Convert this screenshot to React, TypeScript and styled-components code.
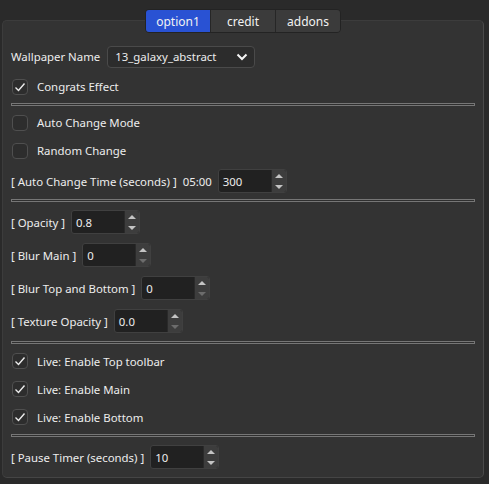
import styled, { createGlobalStyle } from "styled-components";

const Global = createGlobalStyle`
  html, body {
    margin: 0;
    padding: 0;
    background: #2a2a2a;
  }
  body {
    font-family: "Noto Sans", "Open Sans", sans-serif;
    font-size: 11.4px;
    color: #ededed;
  }
`;

const Page = styled.div`
  width: 489px;
  height: 484px;
  padding: 9px 0 0 2px;
  box-sizing: border-box;
`;

const TabWidget = styled.div`
  width: 482px;
  display: flex;
  flex-direction: column;
`;

const TabBar = styled.div`
  align-self: center;
  display: flex;
  height: 24px;
  margin-bottom: -13px;
  position: relative;
  z-index: 1;
  border: 1px solid #232323;
  border-radius: 4px;
  overflow: hidden;
  box-sizing: border-box;
`;

const Tab = styled.div<{ $active?: boolean }>`
  width: 64px;
  display: flex;
  align-items: center;
  justify-content: center;
  font-size: 12px;
  background: ${(p) => (p.$active ? "#2952d3" : "#3b3b3b")};
  color: #f2f2f2;
  & + & {
    border-left: 1px solid #262626;
  }
`;

const Pane = styled.div`
  height: 458px;
  box-sizing: border-box;
  padding: 24px 8px 4px 8px;
  background: #333333;
  border: 1px solid #3c3c3c;
  border-right-color: #4a4a4a;
  border-bottom-color: #454545;
  border-radius: 5px;
  display: flex;
  flex-direction: column;
`;

const FieldRow = styled.div`
  display: flex;
  align-items: center;
  gap: 6px;
  height: 24px;
  margin: 5px 0 4px;
  white-space: nowrap;
`;

const ComboRow = styled(FieldRow)`
  margin: 0 0 4px;
  gap: 7px;
`;

const ComboBox = styled.div`
  width: 148px;
  height: 22px;
  box-sizing: border-box;
  display: flex;
  align-items: center;
  justify-content: space-between;
  padding: 0 6px 0 7px;
  background: #2c2c2c;
  border: 1px solid #4a4a4a;
  border-radius: 4px;
`;

const CheckRow = styled.label`
  display: flex;
  align-items: center;
  gap: 9px;
  height: 28px;
  padding-left: 1px;
`;

const Box = styled.span`
  width: 16px;
  height: 16px;
  box-sizing: border-box;
  border: 1px solid #4f4f4f;
  border-radius: 4px;
  background: #2d2d2d;
  display: flex;
  align-items: center;
  justify-content: center;
`;

const Separator = styled.div<{ $top: number }>`
  height: 3px;
  box-sizing: border-box;
  margin: ${(p) => p.$top}px 0 3px;
  border: 1px solid #767676;
  background: #2f2f2f;
`;

const Spin = styled.div`
  width: 69px;
  height: 24px;
  box-sizing: border-box;
  display: flex;
  background: #212121;
  border: 1px solid #404040;
  border-radius: 3px;
  overflow: hidden;
`;

const SpinValue = styled.div`
  flex: 1;
  display: flex;
  align-items: center;
  padding-left: 4px;
`;

const SpinButtons = styled.div`
  width: 14px;
  display: flex;
  flex-direction: column;
  background: #3d3d3d;
  border-left: 1px solid #2a2a2a;
`;

const Arrow = styled.div<{ $down?: boolean; $off?: boolean }>`
  flex: 1;
  display: flex;
  align-items: center;
  justify-content: center;
  &::after {
    content: "";
    border-left: 4px solid transparent;
    border-right: 4px solid transparent;
    ${(p) => (p.$down ? "border-top" : "border-bottom")}: 4px solid
      ${(p) => (p.$off ? "#6c6c6c" : "#c4c4c4")};
  }
`;

const Check = () => (
  <svg width="12" height="12" viewBox="0 0 12 12">
    <polyline
      points="1.5,6.5 4.5,9.5 10.5,2.5"
      fill="none"
      stroke="#ececec"
      strokeWidth="1.4"
    />
  </svg>
);

const Chevron = () => (
  <svg width="12" height="8" viewBox="0 0 12 8">
    <polyline
      points="1.5,1.5 6,6 10.5,1.5"
      fill="none"
      stroke="#f4f4f4"
      strokeWidth="2"
    />
  </svg>
);

const CheckItem = ({ label, checked }: { label: string; checked?: boolean }) => (
  <CheckRow>
    <Box>{checked && <Check />}</Box>
    {label}
  </CheckRow>
);

const SpinBox = ({ value, downOff }: { value: string; downOff?: boolean }) => (
  <Spin>
    <SpinValue>{value}</SpinValue>
    <SpinButtons>
      <Arrow />
      <Arrow $down $off={downOff} />
    </SpinButtons>
  </Spin>
);

export default function App() {
  return (
    <Page>
      <Global />
      <TabWidget>
        <TabBar>
          <Tab $active>option1</Tab>
          <Tab>credit</Tab>
          <Tab>addons</Tab>
        </TabBar>
        <Pane>
          <ComboRow>
            Wallpaper Name
            <ComboBox>
              13_galaxy_abstract
              <Chevron />
            </ComboBox>
          </ComboRow>
          <CheckItem label="Congrats Effect" checked />
          <Separator $top={2} />
          <CheckItem label="Auto Change Mode" />
          <CheckItem label="Random Change" />
          <FieldRow>
            [ Auto Change Time (seconds) ]<span>05:00</span>
            <SpinBox value="300" />
          </FieldRow>
          <Separator $top={2} />
          <FieldRow>
            [ Opacity ]
            <SpinBox value="0.8" />
          </FieldRow>
          <FieldRow>
            [ Blur Main ]
            <SpinBox value="0" downOff />
          </FieldRow>
          <FieldRow>
            [ Blur Top and Bottom ]
            <SpinBox value="0" downOff />
          </FieldRow>
          <FieldRow>
            [ Texture Opacity ]
            <SpinBox value="0.0" downOff />
          </FieldRow>
          <Separator $top={4} />
          <CheckItem label="Live: Enable Top toolbar" checked />
          <CheckItem label="Live: Enable Main" checked />
          <CheckItem label="Live: Enable Bottom" checked />
          <Separator $top={3} />
          <FieldRow>
            [ Pause Timer (seconds) ]
            <SpinBox value="10" />
          </FieldRow>
        </Pane>
      </TabWidget>
    </Page>
  );
}
